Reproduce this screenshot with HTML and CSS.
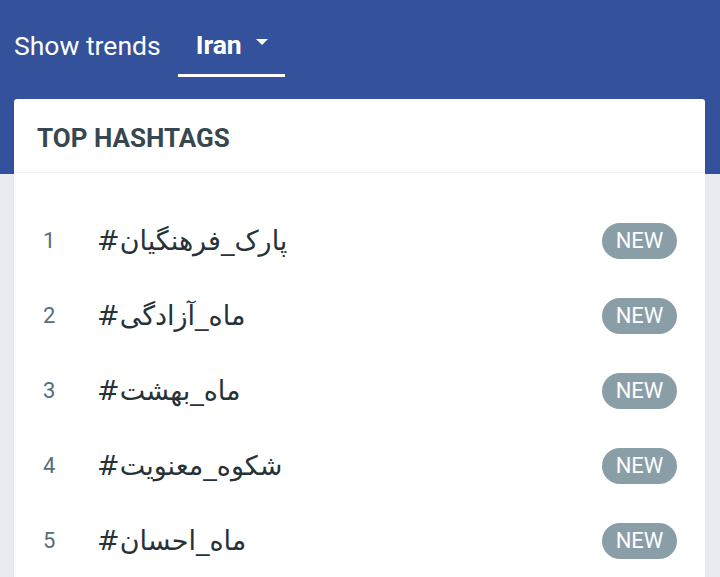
FILE: index.html
```html
<!DOCTYPE html>
<html lang="en">
<head>
<meta charset="utf-8">
<link rel="stylesheet" href="styles.css">
</head>
<body>
<div class="page">
  <header class="topbar">
    <span class="label">Show trends</span>
    <span class="select">
      <span class="select-text">Iran</span>
      <svg class="caret" width="12" height="6" viewBox="0 0 12 6"><path d="M0 0 L12 0 L6 6 Z" fill="#fff"/></svg>
    </span>
  </header>
  <main class="content">
    <section class="card">
      <div class="card-head">TOP HASHTAGS</div>
      <ol class="list">
        <li class="row"><span class="num">1</span><span class="tag">#پارک_فرهنگیان</span><span class="pill">NEW</span></li>
        <li class="row"><span class="num">2</span><span class="tag">#ماه_آزادگی</span><span class="pill">NEW</span></li>
        <li class="row"><span class="num">3</span><span class="tag">#ماه_بهشت</span><span class="pill">NEW</span></li>
        <li class="row"><span class="num">4</span><span class="tag">#شکوه_معنویت</span><span class="pill">NEW</span></li>
        <li class="row"><span class="num">5</span><span class="tag">#ماه_احسان</span><span class="pill">NEW</span></li>
      </ol>
    </section>
  </main>
</div>
</body>
</html>
```
FILE: styles.css
```css
html, body {
  margin: 0;
  padding: 0;
  height: 100%;
  overflow: hidden;
}
body {
  background: #e8ebf0;
  font-family: Roboto, "Liberation Sans", sans-serif;
}
.page {
  height: 577px;
  overflow: hidden;
}
.topbar {
  background: #34519b;
  height: 174px;
  box-sizing: border-box;
  padding: 28px 0 0 14px;
  display: flex;
  align-items: flex-start;
  color: #fff;
}
.label {
  font-size: 26.5px;
  line-height: 36px;
  margin-right: 17px;
}
.select {
  display: flex;
  align-items: center;
  height: 49px;
  box-sizing: border-box;
  padding: 0 17px 13px 18px;
  border-bottom: 3px solid #fff;
}
.select-text {
  font-weight: 700;
  font-size: 26.5px;
  line-height: 36px;
  margin-right: 14px;
}
.caret {
  display: block;
  margin-top: -5px;
}
.content {
  margin-top: -75px;
  padding: 0 15px 0 14px;
}
.card {
  background: #fff;
  border-radius: 3px 3px 0 0;
  box-shadow: 0 1px 2px rgba(0,0,0,0.08);
  height: 478px;
  overflow: hidden;
}
.card-head {
  height: 74px;
  box-sizing: border-box;
  padding: 4px 23px 0 23px;
  display: flex;
  align-items: center;
  font-weight: 700;
  font-size: 26px;
  color: #37474f;
  border-bottom: 1px solid #f0f1f3;
}
.list {
  list-style: none;
  margin: 0;
  padding: 30px 0 0 0;
}
.row {
  height: 75px;
  display: flex;
  align-items: center;
  padding: 0 28px 0 29px;
}
.num {
  width: 54px;
  font-size: 22px;
  color: #546e7a;
}
.tag {
  flex: 1;
  font-family: "DejaVu Sans", sans-serif;
  font-size: 27px;
  color: #263238;
  direction: ltr;
  text-align: left;
}
.pill {
  background: #8a9ea8;
  color: #fff;
  font-size: 22px;
  height: 36px;
  width: 75px;
  border-radius: 18px;
  display: flex;
  align-items: center;
  justify-content: center;
}
```
